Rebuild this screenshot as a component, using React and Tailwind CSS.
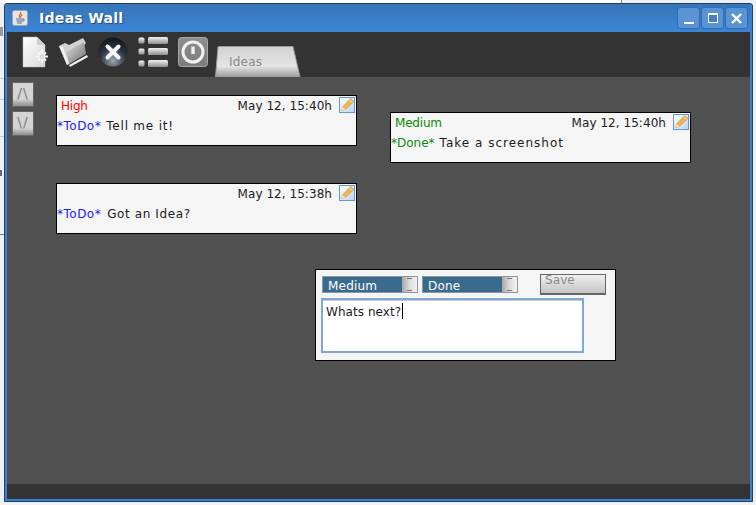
import React from "react";

const dejavu = "font-['DejaVu_Sans',sans-serif]";

const EditIcon = () => (
  <svg width="16" height="16" viewBox="0 0 16 16" className="mt-[1px]">
    <defs>
      <linearGradient id="pageG" x1="0" y1="0" x2="1" y2="1">
        <stop offset="0" stopColor="#ffffff" />
        <stop offset="1" stopColor="#b9d4f2" />
      </linearGradient>
    </defs>
    <rect x="0.5" y="0.5" width="15" height="15" fill="url(#pageG)" stroke="#5b9ae0" />
    <path d="M2.5 13.5 L3.5 10 L11.5 1.5 L15 4.5 L6.5 12.5 Z" fill="#efb64e" stroke="#c08a32" strokeWidth="0.5" />
    <path d="M2.5 13.5 L3.5 10 L6.5 12.5 Z" fill="#f6e3bd" />
    <path d="M10.5 3 L13.5 5.5" stroke="#f9e09a" strokeWidth="1" />
  </svg>
);

const Note = ({ className, priority, priorityColor, time, status, statusClass, text, textClass }) => (
  <div className={`absolute w-[301px] h-[51px] border border-black bg-[#f5f5f5] text-[12px] text-[#1c1c1c] ${dejavu} ${className}`}>
    <div className="flex items-start h-[19px] pl-[4px] pr-[1px]">
      <span className={`mt-[1px] tracking-[-0.2px] ${priorityColor}`}>{priority}</span>
      <span className="ml-auto mr-[7px] mt-[1px] tracking-[0.05px]">{time}</span>
      <EditIcon />
    </div>
    <div className="flex h-[20px] items-center pt-[2px] whitespace-pre">
      <span className={statusClass}>{status}</span>
      <span className={textClass}>{text}</span>
    </div>
  </div>
);

const Combo = ({ label, width }) => (
  <div className={`flex h-[17px] ${width} border border-[#8a97a3] bg-[#3a6a8c]`}>
    <span className="flex-1 pl-[5px] pt-[1px] text-[12px] leading-[17px] tracking-[0.2px] text-white">{label}</span>
    <div className="w-[15px] bg-gradient-to-r from-[#a8a8a8] via-[#dcdcdc] to-[#f2f2f2] flex flex-col items-center justify-between py-[1px]">
      <div className="w-[5px] h-[1px] bg-[#777]" />
      <div className="w-[5px] h-[1px] bg-[#777]" />
    </div>
  </div>
);

const SideButton = ({ label, className }) => (
  <div className={`flex w-[22px] justify-center border border-[#666] bg-gradient-to-b from-[#d4d4d4] from-70% to-[#8e8e8e] pt-[2px] text-[14px] leading-[16px] tracking-[1px] text-[#7a7a7a] ${dejavu} ${className}`}>
    {label}
  </div>
);

const JavaIcon = () => (
  <svg width="16" height="16" viewBox="0 0 16 16">
    <rect x="0.5" y="0.5" width="15" height="15" rx="2" fill="#e6e6e6" stroke="#9aa4ae" />
    <path d="M8.5 2 C10 4 6 5 7.5 7.5 C6.2 5.5 9.5 5 8.5 2 Z M10 4.5 C9.5 6 8.2 6 8.5 7.8" fill="none" stroke="#e0662a" strokeWidth="1.2" />
    <path d="M4 9 H11 M4.5 11 H10.5 M5 13 H10" stroke="#4c6a94" strokeWidth="1" />
    <path d="M11 9 C13 9 13 11 10.5 11" fill="none" stroke="#4c6a94" />
  </svg>
);

const FileIcon = () => (
  <svg width="26" height="32" viewBox="0 0 26 32">
    <defs>
      <linearGradient id="fileG" x1="0" y1="0" x2="1" y2="1">
        <stop offset="0" stopColor="#ffffff" />
        <stop offset="1" stopColor="#d8d8d8" />
      </linearGradient>
    </defs>
    <path d="M1 1 H15 L23 9 V31 H1 Z" fill="url(#fileG)" stroke="#bbb" strokeWidth="0.5" />
    <path d="M15 1 L23 9 H15 Z" fill="#cfcfcf" />
    <path d="M20 14 V27 M14 20.5 H26 M16 16.5 L24 24.5 M24 16.5 L16 24.5" stroke="#f6f6f6" strokeWidth="2" />
    <circle cx="20" cy="20.5" r="2.5" fill="#dcdcdc" />
  </svg>
);

const FolderIcon = () => (
  <svg width="30" height="30" viewBox="0 0 30 30">
    <defs>
      <linearGradient id="folderG" x1="0" y1="0" x2="1" y2="1">
        <stop offset="0" stopColor="#e4e4e4" />
        <stop offset="1" stopColor="#6a6a6a" />
      </linearGradient>
    </defs>
    <path d="M1 9 L7 6 L11 8 L25 1 L28 6 L12 26 L9 28 Z" fill="#d2d2d2" />
    <path d="M8 15 L26 5 L28 17 L11 27 Z" fill="url(#folderG)" />
    <path d="M11 28 L29 18 L30 20 L12 30 Z" fill="#f2f2f2" />
    <path d="M1 9 L9 28 L11 27 L5 10 Z" fill="#efefef" />
  </svg>
);

const CloseIcon = () => (
  <svg width="30" height="30" viewBox="0 0 30 30">
    <defs>
      <radialGradient id="closeG" cx="0.5" cy="0.8" r="0.8">
        <stop offset="0" stopColor="#9aa6b2" />
        <stop offset="0.55" stopColor="#2c3542" />
        <stop offset="1" stopColor="#10161d" />
      </radialGradient>
    </defs>
    <circle cx="15" cy="15" r="14.5" fill="url(#closeG)" />
    <path d="M9.5 9.5 L20.5 20.5 M20.5 9.5 L9.5 20.5" stroke="#f4f4f4" strokeWidth="4" strokeLinecap="round" />
  </svg>
);

const ListIcon = () => (
  <svg width="30" height="30" viewBox="0 0 30 30">
    <defs>
      <linearGradient id="listG" x1="0" y1="0" x2="0" y2="1">
        <stop offset="0" stopColor="#f2f2f2" />
        <stop offset="1" stopColor="#8f8f8f" />
      </linearGradient>
    </defs>
    {[0, 11, 23].map((y) => (
      <g key={y}>
        <rect x="0.5" y={y + 0.5} width="6" height="6" rx="1.5" fill="url(#listG)" />
        <rect x="10" y={y} width="20" height="7" rx="1.5" fill="url(#listG)" />
      </g>
    ))}
  </svg>
);

const PowerIcon = () => (
  <svg width="30" height="30" viewBox="0 0 30 30">
    <defs>
      <linearGradient id="powerG" x1="0" y1="0" x2="0" y2="1">
        <stop offset="0" stopColor="#8e8e8e" />
        <stop offset="1" stopColor="#7c7c7c" />
      </linearGradient>
    </defs>
    <rect x="0.5" y="0.5" width="29" height="29" rx="3" fill="url(#powerG)" stroke="#a8a8a8" />
    <circle cx="15" cy="15" r="10" fill="none" stroke="#f1f1f1" strokeWidth="3" />
    <path d="M15 9.5 V17" stroke="#f1f1f1" strokeWidth="3.4" />
  </svg>
);

const WinButton = ({ children }) => (
  <div className="flex h-[22px] w-[23px] items-center justify-center rounded-[3px] border border-[#2f6db0] bg-[#5a94d4]">
    {children}
  </div>
);

const App = () => {
  return (
    <div className="relative h-[505px] w-[756px] overflow-hidden bg-[#eef1f3] pl-[4px] pr-[3px] pt-[3px]">
      {/* bits of the desktop showing behind the window */}
      <div className="absolute left-0 top-0 h-[3px] w-[621px] bg-white" />
      <div className="absolute left-[621px] top-0 h-[3px] w-[1px] bg-[#888]" />
      <div className="absolute left-0 top-[27px] h-[9px] w-[3px] bg-[#999]" />
      <div className="absolute left-0 top-[78px] h-[1px] w-[4px] bg-[#ccc]" />
      <div className="absolute left-0 top-[99px] h-[1px] w-[4px] bg-[#ccc]" />
      <div className="absolute left-0 top-[136px] h-[1px] w-[4px] bg-[#ccc]" />
      <div className="absolute left-0 top-[170px] h-[6px] w-[2px] bg-[#666]" />
      <div className="absolute left-0 top-[234px] h-[1px] w-[4px] bg-[#777]" />

      <div className="relative flex h-[499px] w-[749px] flex-col rounded-t-[3px] border border-[#1f3f66] bg-[#3a80cd] px-[2px] pb-[2px]">
        {/* title bar */}
        <div className={`flex h-[28px] items-center bg-gradient-to-b from-[#3775b8] to-[#3c85d6] pl-[5px] pr-[2px] ${dejavu}`}>
          <JavaIcon />
          <span className="ml-[11px] text-[14px] font-bold tracking-[0.3px] text-white [text-shadow:1px_1px_1px_#1d4a7d]">Ideas Wall</span>
          <div className="ml-auto flex gap-[1px]">
            <WinButton><div className="mt-[10px] h-[2px] w-[10px] bg-white" /></WinButton>
            <WinButton><div className="h-[10px] w-[10px] border border-t-2 border-white bg-[#4a80bd]" /></WinButton>
            <WinButton>
              <svg width="11" height="11" viewBox="0 0 11 11"><path d="M1 1 L10 10 M10 1 L1 10" stroke="#fff" strokeWidth="2.4" /></svg>
            </WinButton>
          </div>
        </div>

        {/* toolbar */}
        <div className="flex h-[45px] items-start bg-[#333333] pl-[15px] pt-[4px]">
          <FileIcon />
          <div className="ml-[10px] mt-[1px]"><FolderIcon /></div>
          <div className="ml-[10px] mt-[1px]"><CloseIcon /></div>
          <div className="ml-[10px] mt-[1px]"><ListIcon /></div>
          <div className="ml-[10px] mt-[1px]"><PowerIcon /></div>
          <div className={`relative ml-[7px] mt-[10px] h-[31px] w-[86px] ${dejavu}`}>
            <svg className="absolute inset-0" width="86" height="31" viewBox="0 0 86 31">
              <defs>
                <linearGradient id="tabG" x1="0" y1="0" x2="0" y2="1">
                  <stop offset="0" stopColor="#d2d2d2" />
                  <stop offset="0.65" stopColor="#e4e4e4" />
                  <stop offset="1" stopColor="#9c9c9c" />
                </linearGradient>
              </defs>
              <path d="M0.5 31 L3 1 Q3.5 0.5 5 0.5 H78 L85 31 Z" fill="url(#tabG)" stroke="#9a9a9a" />
            </svg>
            <span className="absolute left-[14px] top-[7px] text-[12px] tracking-[0.2px] text-[#8a8a8a]">Ideas</span>
          </div>
        </div>

        {/* wall */}
        <div className="relative flex-1 bg-[#505050] pl-[5px] pt-[5px]">
          <SideButton label="/\" className="h-[25px]" />
          <SideButton label="\/" className="mt-[4px] h-[25px]" />

          <Note className="left-[49px] top-[18px]" priority="High" priorityColor="text-[#ff0000]" time="May 12, 15:40h" status="*ToDo*" statusClass="tracking-[0.5px] text-[#2222ee]" text="Tell me it!" textClass="ml-[5px] tracking-[0.8px]" />
          <Note className="left-[383px] top-[35px]" priority="Medium" priorityColor="text-[#0a8a0a]" time="May 12, 15:40h" status="*Done*" statusClass="tracking-[0px] text-[#0a8a0a]" text="Take a screenshot" textClass="ml-[5px] tracking-[1px]" />
          <Note className="left-[49px] top-[106px]" priority="" priorityColor="" time="May 12, 15:38h" status="*ToDo*" statusClass="tracking-[0.5px] text-[#2222ee]" text="Got an Idea?" textClass="ml-[6px] tracking-[0.6px]" />

          {/* editor */}
          <div className={`absolute left-[308px] top-[192px] h-[92px] w-[301px] border border-black bg-[#f5f5f5] pl-[5px] pt-[4px] ${dejavu}`}>
            <div className="flex items-start">
              <div className="mt-[2px] flex gap-[4px] pl-[1px]">
                <Combo label="Medium" width="w-[96px]" />
                <Combo label="Done" width="w-[96px]" />
              </div>
              <div className="ml-[22px] h-[21px] w-[66px] border border-[#666] border-b-2 bg-gradient-to-b from-[#f0f0f0] to-[#c4c4c4] pl-[4px] text-[12px] leading-[10px] tracking-[0.1px] text-[#8a8a8a]">Save</div>
            </div>
            <div className="mt-[3px] h-[55px] w-[263px] border-2 border-[#7fa8d4] bg-white pl-[3px] text-[12px] leading-[18px] tracking-[0.05px] text-[#1c1c1c] shadow-[inset_0_1px_0_#cccccc]">
              Whats next?<span className="ml-[1px] inline-block h-[16px] w-[1px] translate-y-[3px] bg-black" />
            </div>
          </div>
        </div>

        {/* status bar */}
        <div className="h-[15px] bg-[#333333]" />
      </div>
    </div>
  );
};

export default App;
